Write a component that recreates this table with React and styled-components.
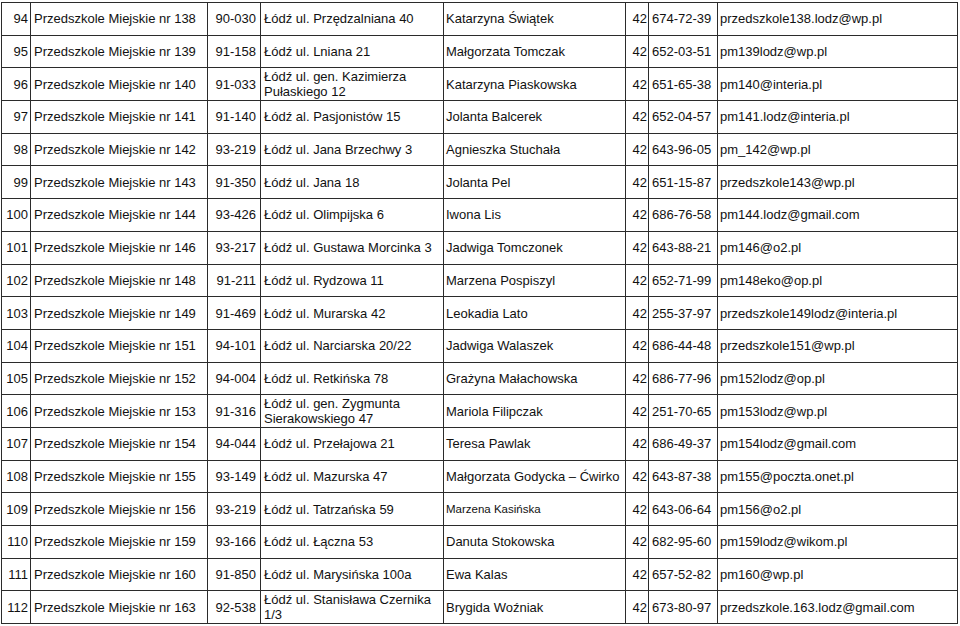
import React from "react";
import styled, { createGlobalStyle } from "styled-components";

const GlobalStyle = createGlobalStyle`
  html, body {
    margin: 0;
    padding: 0;
    background: #ffffff;
  }
  body {
    font-family: "Liberation Sans", Arial, sans-serif;
    color: #111;
  }
`;

const Page = styled.div`
  padding: 2px 0 0 1px;
`;

const Table = styled.table`
  border-collapse: collapse;
  table-layout: fixed;
  width: 956px;
  font-size: 13px;
`;

const Row = styled.tr`
  height: 32.7px;
`;

const Cell = styled.td`
  border: 1px solid #2b2b2b;
  padding: 0 ${(p) => p.$pr || 2}px 0 ${(p) => p.$pl || 2}px;
  text-align: ${(p) => p.$align || "left"};
  vertical-align: middle;
  white-space: nowrap;
  overflow: hidden;
  line-height: 15px;
  font-size: ${(p) => (p.$small ? "11.5px" : "13px")};
`;

const Wrap = styled.span`
  display: block;
  line-height: 15.5px;
`;

const cols = [29, 177, 53, 183, 182, 23, 69, 240];

const data = [
  ["94", "138", "90-030", ["Łódź ul. Przędzalniana 40"], "Katarzyna Świątek", "674-72-39", "przedszkole138.lodz@wp.pl"],
  ["95", "139", "91-158", ["Łódź ul. Lniana 21"], "Małgorzata Tomczak", "652-03-51", "pm139lodz@wp.pl"],
  ["96", "140", "91-033", ["Łódź ul. gen. Kazimierza", "Pułaskiego 12"], "Katarzyna Piaskowska", "651-65-38", "pm140@interia.pl"],
  ["97", "141", "91-140", ["Łódź al. Pasjonistów 15"], "Jolanta Balcerek", "652-04-57", "pm141.lodz@interia.pl"],
  ["98", "142", "93-219", ["Łódź ul. Jana Brzechwy 3"], "Agnieszka Stuchała", "643-96-05", "pm_142@wp.pl"],
  ["99", "143", "91-350", ["Łódź ul. Jana 18"], "Jolanta Pel", "651-15-87", "przedszkole143@wp.pl"],
  ["100", "144", "93-426", ["Łódź ul. Olimpijska 6"], "Iwona Lis", "686-76-58", "pm144.lodz@gmail.com"],
  ["101", "146", "93-217", ["Łódź ul. Gustawa Morcinka 3"], "Jadwiga Tomczonek", "643-88-21", "pm146@o2.pl"],
  ["102", "148", "91-211", ["Łódź ul. Rydzowa 11"], "Marzena Pospiszyl", "652-71-99", "pm148eko@op.pl"],
  ["103", "149", "91-469", ["Łódź ul. Murarska 42"], "Leokadia Lato", "255-37-97", "przedszkole149lodz@interia.pl"],
  ["104", "151", "94-101", ["Łódź ul. Narciarska 20/22"], "Jadwiga Walaszek", "686-44-48", "przedszkole151@wp.pl"],
  ["105", "152", "94-004", ["Łódź ul. Retkińska 78"], "Grażyna Małachowska", "686-77-96", "pm152lodz@op.pl"],
  ["106", "153", "91-316", ["Łódź ul. gen. Zygmunta", "Sierakowskiego 47"], "Mariola Filipczak", "251-70-65", "pm153lodz@wp.pl"],
  ["107", "154", "94-044", ["Łódź ul. Przełajowa 21"], "Teresa Pawlak", "686-49-37", "pm154lodz@gmail.com"],
  ["108", "155", "93-149", ["Łódź ul. Mazurska 47"], "Małgorzata Godycka – Ćwirko", "643-87-38", "pm155@poczta.onet.pl"],
  ["109", "156", "93-219", ["Łódź ul. Tatrzańska 59"], "Marzena Kasińska", "643-06-64", "pm156@o2.pl", true],
  ["110", "159", "93-166", ["Łódź ul. Łączna 53"], "Danuta Stokowska", "682-95-60", "pm159lodz@wikom.pl"],
  ["111", "160", "91-850", ["Łódź ul. Marysińska 100a"], "Ewa Kalas", "657-52-82", "pm160@wp.pl"],
  ["112", "163", "92-538", ["Łódź ul. Stanisława Czernika", "1/3"], "Brygida Woźniak", "673-80-97", "przedszkole.163.lodz@gmail.com"],
];

export default function App() {
  return (
    <>
      <GlobalStyle />
      <Page>
        <Table>
          <colgroup>
            {cols.map((w, i) => (
              <col key={i} style={{ width: w }} />
            ))}
          </colgroup>
          <tbody>
            {data.map(([no, nr, zip, addr, person, phone, mail, small]) => (
              <Row key={no}>
                <Cell $align="right" $pr={2} $pl={0}>{no}</Cell>
                <Cell $pl={3}>Przedszkole Miejskie nr {nr}</Cell>
                <Cell $align="right" $pr={4}>{zip}</Cell>
                <Cell $pl={3}>
                  {addr.length > 1 ? (
                    <Wrap>
                      {addr[0]}
                      <br />
                      {addr[1]}
                    </Wrap>
                  ) : (
                    addr[0]
                  )}
                </Cell>
                <Cell $pl={2} $small={small}>{person}</Cell>
                <Cell $align="right" $pr={1} $pl={0}>42</Cell>
                <Cell $pl={3}>{phone}</Cell>
                <Cell $pl={2}>{mail}</Cell>
              </Row>
            ))}
          </tbody>
        </Table>
      </Page>
    </>
  );
}
